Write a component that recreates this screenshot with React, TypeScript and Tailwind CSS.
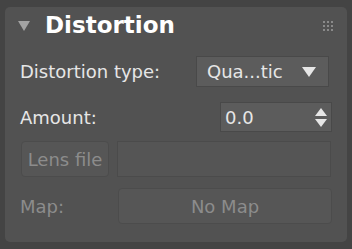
export default function App() {
  return (
    <div className="w-[352px] h-[249px] bg-[#444444] pt-[7px] px-[5px] font-['DejaVu_Sans',sans-serif]">
      <div className="h-[235px] rounded-[5px] bg-[#525252] relative">
        {/* header */}
        <div className="h-[37px] flex items-center">
          <div className="ml-[13px] w-0 h-0 border-l-[6px] border-r-[6px] border-t-[10px] border-l-transparent border-r-transparent border-t-[#a3a3a3]" />
          <span className="ml-[15px] text-[23px] font-bold text-white leading-none">Distortion</span>
          <div className="ml-auto mr-[14px] grid grid-cols-3 gap-[2px]">
            {Array.from({ length: 9 }).map((_, i) => (
              <div key={i} className="w-[2px] h-[2px] bg-[#8a8a8a]" />
            ))}
          </div>
        </div>

        {/* distortion type */}
        <div className="mt-[12px] h-[31px] flex items-center">
          <span className="ml-[15px] text-[18px] text-[#e6e6e6]">Distortion type:</span>
          <div className="ml-auto mr-[18px] w-[133px] h-[31px] bg-[#5c5c5c] border border-[#494949] flex items-center">
            <span className="ml-[10px] text-[18px] text-[#e6e6e6]">Qua...tic</span>
            <div className="ml-auto mr-[12px] w-0 h-0 border-l-[7px] border-r-[7px] border-t-[10px] border-l-transparent border-r-transparent border-t-[#e6e6e6]" />
          </div>
        </div>

        {/* amount */}
        <div className="mt-[15px] h-[30px] flex items-center">
          <span className="ml-[15px] text-[18px] text-[#e6e6e6]">Amount:</span>
          <div className="ml-auto mr-[15px] w-[112px] h-[30px] bg-[#5c5c5c] border border-[#494949] flex items-center">
            <span className="ml-[4px] text-[18px] text-[#e6e6e6]">0.0</span>
            <div className="ml-auto mr-[4px] flex flex-col gap-[3px]">
              <div className="w-0 h-0 border-l-[6px] border-r-[6px] border-b-[8px] border-l-transparent border-r-transparent border-b-[#e6e6e6]" />
              <div className="w-0 h-0 border-l-[6px] border-r-[6px] border-t-[8px] border-l-transparent border-r-transparent border-t-[#e6e6e6]" />
            </div>
          </div>
        </div>

        {/* lens file */}
        <div className="mt-[9px] h-[36px] flex items-center">
          <div className="ml-[16px] w-[88px] h-[36px] rounded-[4px] bg-[#565656] border border-[#4c4c4c] flex items-center justify-center text-[18px] text-[#8c8c8c]">
            Lens file
          </div>
          <div className="ml-[8px] w-[214px] h-[36px] bg-[#555555] border border-[#4b4b4b]" />
        </div>

        {/* map */}
        <div className="mt-[11px] h-[36px] flex items-center">
          <span className="ml-[15px] text-[18px] text-[#8c8c8c]">Map:</span>
          <div className="ml-auto mr-[15px] w-[214px] h-[36px] rounded-[4px] bg-[#565656] border border-[#4c4c4c] flex items-center justify-center text-[18px] text-[#8c8c8c]">
            No Map
          </div>
        </div>
      </div>
    </div>
  )
}
